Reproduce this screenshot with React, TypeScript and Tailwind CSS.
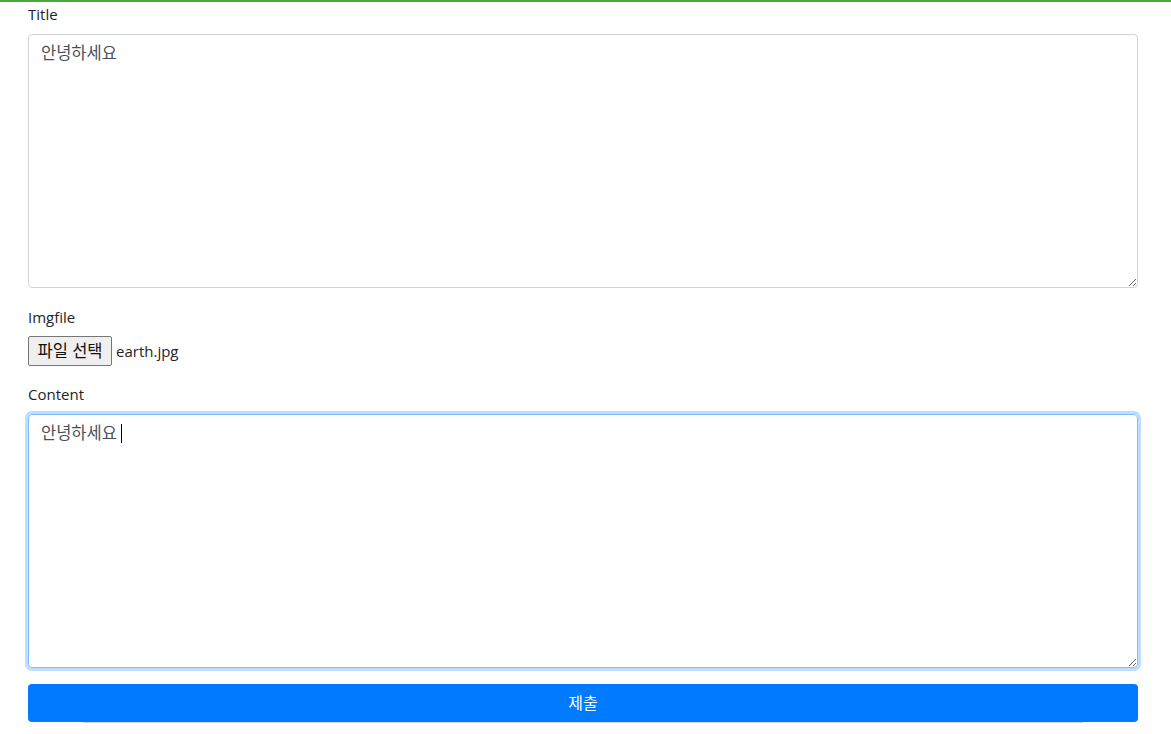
import React from 'react';

const font = { fontFamily: '"Open Sans", "Noto Sans CJK KR", sans-serif' };

export default function App() {
  return (
    <div className="min-h-[734px] bg-white text-[#212529] text-[15px] leading-[1.5]" style={font}>
      <div className="h-[2px] bg-[#48a93a]" />
      <div className="w-[1110px] ml-[28px] pt-[1px]">
        <div className="mb-[18px]">
          <label className="block mb-2">Title</label>
          <textarea
            className="block w-full h-[254px] rounded border border-[#ced4da] px-3 py-[6px] text-[16.5px] text-[#495057] resize-y outline-none"
            defaultValue="안녕하세요"
            style={font}
          />
        </div>

        <div className="mb-[17px]">
          <label className="block mb-2">Imgfile</label>
          <div className="flex items-center gap-1 h-[30px]">
            <button
              className="h-[30px] px-[8.5px] bg-[#efefef] border border-[#767676] rounded-[2px] text-[#111] text-[16.5px] font-normal"
              style={font}
            >
              파일 선택
            </button>
            <span className="text-[#212529]">earth.jpg</span>
          </div>
        </div>

        <div className="mb-4">
          <label className="block mb-2">Content</label>
          <div className="relative">
            <textarea
              className="block w-full h-[254px] rounded border border-[#80bdff] shadow-[0_0_0_3px_rgba(0,123,255,0.25)] px-3 py-[6px] text-[16.5px] text-[#495057] resize-y outline-none"
              defaultValue="안녕하세요"
              style={font}
            />
            <span className="absolute left-[93px] top-[10px] w-px h-[19px] bg-black" />
          </div>
        </div>

        <button className="block w-full h-[38px] rounded bg-[#007bff] text-white text-[16px]">제출</button>
        <div className="h-px mx-[55px] bg-[#d4d4d4]" />
      </div>
    </div>
  );
}
